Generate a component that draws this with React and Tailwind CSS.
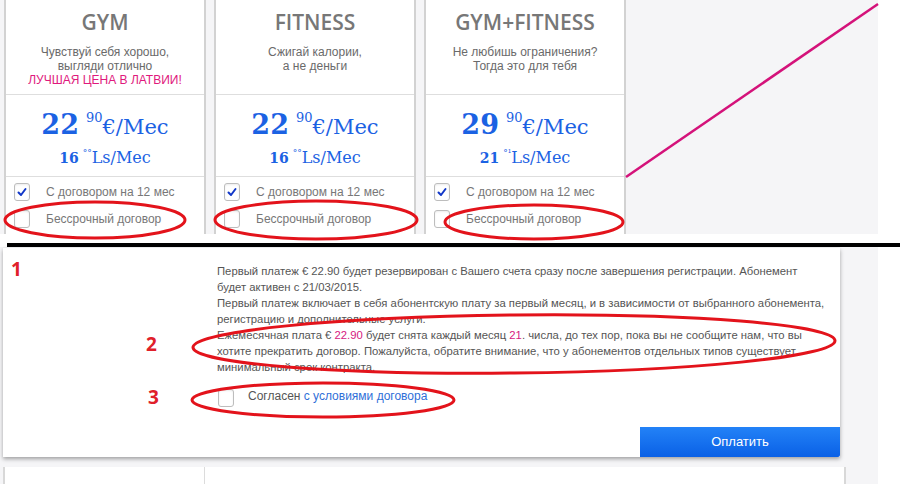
import React from 'react';

const plans = [
  {
    title: 'GYM',
    lines: ['Чувствуй себя хорошо,', 'выгляди отлично'],
    accent: 'ЛУЧШАЯ ЦЕНА В ЛАТВИИ!',
    eur: '22',
    ls: '16',
    lsCents: '°°',
  },
  {
    title: 'FITNESS',
    lines: ['Сжигай калории,', 'а не деньги'],
    eur: '22',
    ls: '16',
    lsCents: '°°',
  },
  {
    title: 'GYM+FITNESS',
    lines: ['Не любишь ограничения?', 'Тогда это для тебя'],
    eur: '29',
    ls: '21',
    lsCents: '°¹',
  },
];

const Checkbox = ({ checked }) => (
  <span className="flex h-[18px] w-[16px] shrink-0 items-center justify-center rounded-[3px] border border-[#bdbdbd] bg-white shadow-[inset_0_1px_2px_rgba(0,0,0,0.08)]">
    {checked && (
      <svg width="10" height="10" viewBox="0 0 10 10">
        <path d="M1.5 5.5 L4 8 L8.5 2" fill="none" stroke="#1238c8" strokeWidth="2" strokeLinecap="round" strokeLinejoin="round" />
      </svg>
    )}
  </span>
);

const PlanCard = ({ plan }) => (
  <div className="flex w-[202px] shrink-0 flex-col border-x-2 border-[#d2d2d2] bg-white">
    <div className="flex h-[95px] flex-col items-center border-b border-[#dedede] pt-[10px]">
      <div className="font-['Open_Sans'] text-[21px] font-semibold leading-[24px] text-[#777]">{plan.title}</div>
      <div className="mt-[11px] text-center text-[12px] leading-[14px] text-[#6a6a6a]">
        {plan.lines.map((l) => (
          <div key={l}>{l}</div>
        ))}
        {plan.accent && <div className="text-[#e0197d]">{plan.accent}</div>}
      </div>
    </div>
    <div className="flex h-[82px] flex-col items-center border-b border-[#dedede] pt-[15px] font-['DejaVu_Serif'] text-[#1b62e3]">
      <div className="flex items-start leading-none">
        <span className="text-[27px] font-bold leading-[30px]">{plan.eur}</span>
        <span className="ml-[7px] mt-[1px] text-[13px]">90</span>
        <span className="mt-[4px] text-[21px] leading-[26px]">€/Mec</span>
      </div>
      <div className="mt-[9px] flex items-start leading-none">
        <span className="text-[14px] font-bold leading-[18px]">{plan.ls}</span>
        <span className="ml-[4px] text-[9px]">{plan.lsCents}</span>
        <span className="text-[16px] leading-[18px]">Ls/Mec</span>
      </div>
    </div>
    <div className="flex flex-col gap-[9px] pl-[8px] pt-[6px] text-[12px] text-[#777]">
      <div className="flex items-center gap-[16px]">
        <Checkbox checked />
        <span>С договором на 12 мес</span>
      </div>
      <div className="flex items-center gap-[16px]">
        <Checkbox />
        <span>Бессрочный договор</span>
      </div>
    </div>
  </div>
);

const Pink = ({ children }) => <span className="text-[#d6197f]">{children}</span>;

export default function App() {
  return (
    <div className="relative h-[484px] w-[900px] overflow-hidden bg-white font-['Liberation_Sans',sans-serif]">
      <div className="flex h-[234px]">
        <div className="flex w-[878px] gap-[8px] bg-[#f5f5f7] pl-[4px]">
          {plans.map((p) => (
            <PlanCard key={p.title} plan={p} />
          ))}
        </div>
      </div>

      <div className="ml-[7px] mt-[9px] h-[4px] bg-black" />

      <div className="flex">
        <div className="w-[878px] bg-[#f5f5f7] pl-[3px] pt-[1px]">
          <div className="relative flex h-[209px] w-[837px] bg-white shadow-[0_2px_4px_rgba(0,0,0,0.35)]">
            <div className="w-[214px] shrink-0" />
            <div className="flex flex-1 flex-col pt-[15px]">
              <div className="whitespace-nowrap text-[11.3px] leading-[16px] text-[#555]">
                <div>Первый платеж € 22.90 будет резервирован с Вашего счета сразу после завершения регистрации. Абонемент</div>
                <div>будет активен с 21/03/2015.</div>
                <div>Первый платеж включает в себя абонентскую плату за первый месяц, и в зависимости от выбранного абонемента,</div>
                <div>регистрацию и дополнительные услуги.</div>
                <div>
                  Ежемесячная плата € <Pink>22.90</Pink> будет снята каждый месяц <Pink>21</Pink>. числа, до тех пор, пока вы не сообщите нам, что вы
                </div>
                <div>хотите прекратить договор. Пожалуйста, обратите внимание, что у абонементов отдельных типов существует</div>
                <div>минимальный срок контракта.</div>
              </div>
              <div className="mt-[14px] flex items-start gap-[14px] pl-[1px]">
                <Checkbox />
                <span className="text-[12px] leading-[14px] text-[#555]">
                  Согласен <span className="text-[#2f6fd8]">с условиями договора</span>
                </span>
              </div>
            </div>
            <button className="absolute bottom-0 right-0 h-[30px] w-[200px] rounded-br-[2px] bg-gradient-to-b from-[#2382f7] to-[#0a60e6] text-[13px] text-white">
              Оплатить
            </button>
            <span className="absolute left-[8px] top-[12px] font-['Open_Sans'] text-[19px] font-bold leading-none text-[#e0202a]">1</span>
            <span className="absolute left-[143px] top-[87px] font-['Open_Sans'] text-[19px] font-bold leading-none text-[#e0202a]">2</span>
            <span className="absolute left-[145px] top-[140px] font-['Open_Sans'] text-[19px] font-bold leading-none text-[#e0202a]">3</span>
          </div>
          <div className="mt-[10px] flex h-[40px] w-[843px] border-x-2 border-[#d8d8d8] bg-white">
            <div className="w-[200px] border-r border-[#dcdcdc]" />
          </div>
        </div>
      </div>

      <svg className="pointer-events-none absolute left-0 top-0" width="900" height="484">
        <line x1="626" y1="177" x2="878" y2="4" stroke="#d4127a" strokeWidth="2.5" />
        <g fill="none" stroke="#e3131b" strokeWidth="3">
          <ellipse cx="95" cy="220" rx="90" ry="18" />
          <ellipse cx="316" cy="220" rx="101" ry="19" />
          <ellipse cx="534" cy="222" rx="89" ry="17" />
          <ellipse cx="514" cy="344" rx="321" ry="29" transform="rotate(-0.6 514 344)" />
          <ellipse cx="323" cy="400" rx="131" ry="17" />
        </g>
      </svg>
    </div>
  );
}
